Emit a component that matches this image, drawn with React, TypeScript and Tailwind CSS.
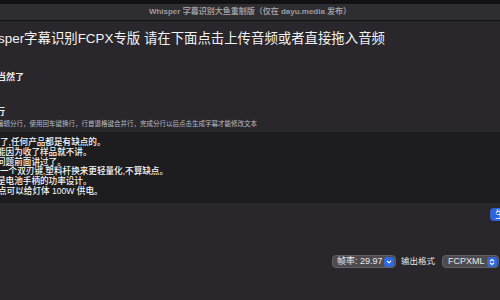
import React from "react";

const font = {
  fontFamily:
    '"Liberation Sans", "Noto Sans CJK SC", "Noto Sans", sans-serif',
};

// text in the transcript box, left edge of the window crops a few pixels
const lines = [
  { text: "了,任何产品都是有缺点的。", shift: 0 },
  { text: "能因为收了样品就不讲。", shift: -3 },
  { text: "问题前面讲过了。", shift: -3 },
  { text: "一个双刃键,塑料杆换来更轻量化,不算缺点。", shift: 0 },
  { text: "是电池手柄的功率设计。", shift: -3 },
  { text: "点可以给灯体 100W 供电。", shift: -2 },
];

function Chevron({ double = false }: { double?: boolean }) {
  return (
    <span className="flex h-[10px] w-[10px] items-center justify-center rounded-[3px] bg-[#2f6ae0]">
      {double ? (
        <svg width="6" height="8" viewBox="0 0 6 8" fill="none">
          <path d="M1.3 3 3 1.4 4.7 3M1.3 5 3 6.6 4.7 5" stroke="white" strokeWidth="1.1" strokeLinecap="round" strokeLinejoin="round" />
        </svg>
      ) : (
        <svg width="6" height="6" viewBox="0 0 6 6" fill="none">
          <path d="M1.3 2.2 3 3.9 4.7 2.2" stroke="white" strokeWidth="1.2" strokeLinecap="round" strokeLinejoin="round" />
        </svg>
      )}
    </span>
  );
}

export default function App() {
  return (
    <div className="flex h-[300px] w-[500px] flex-col overflow-hidden bg-[#29272c] text-[#ececec]" style={font}>
      {/* title bar */}
      <div className="h-[4px] bg-[#111113]" />
      <div className="flex h-[17px] items-center justify-center border-b border-[#141416] bg-[#2e2d31] text-[8px] font-semibold text-[#9c9b9f]">
        Whisper 字幕识别大鱼重制版（仅在 dayu.media 发布）
      </div>

      {/* heading */}
      <div className="ml-[-25px] mt-[9px] whitespace-nowrap text-[13.4px] leading-[18px] text-[#f2f2f2]">
        Whisper字幕识别FCPX专版 请在下面点击上传音频或者直接拖入音频
      </div>

      <div className="ml-[-3px] mt-[23px] whitespace-nowrap text-[9px] font-bold leading-[12px]">
        当然了
      </div>

      <div className="ml-[-4px] mt-[23px] whitespace-nowrap text-[9px] font-bold leading-[12px]">
        行
      </div>
      <div className="ml-[-3px] mt-[1px] whitespace-nowrap text-[6.5px] leading-[9px] text-[#bdbcc0]">
        编辑分行，使用回车键换行，行首退格键合并行，完成分行以后点击生成字幕才能修改文本
      </div>

      {/* transcript box */}
      <div className="mt-[4px] h-[71px] bg-[#1d1d1f] pt-[6px]">
        {lines.map((l) => (
          <div
            key={l.text}
            className="whitespace-nowrap text-[8.6px] font-medium leading-[9.8px] text-[#f6f6f6]"
            style={{ marginLeft: l.shift }}
          >
            {l.text}
          </div>
        ))}
      </div>

      {/* generate button */}
      <div className="mt-[5px] flex justify-end">
        <button className="mr-[-40px] flex h-[13px] items-center whitespace-nowrap rounded-[4px] bg-[#2c62da] px-[5px] text-[10px] leading-none text-white shadow">
          生成字幕
        </button>
      </div>

      {/* bottom controls */}
      <div className="mt-[34px] flex items-center justify-end pr-[1px] text-[9px] text-[#e6e6e6]">
        <div className="flex h-[13px] w-[64px] items-center justify-between whitespace-nowrap rounded-[4px] border border-[#626065] bg-[#4d4b50] pl-[4px] pr-[1px]">
          <span>帧率: 29.97</span>
          <Chevron />
        </div>
        <span className="ml-[5px] mr-[7px] whitespace-nowrap text-[8.5px]">输出格式</span>
        <div className="flex h-[13px] w-[57px] items-center justify-between whitespace-nowrap rounded-[4px] border border-[#626065] bg-[#4d4b50] pl-[5px] pr-[1px]">
          <span>FCPXML</span>
          <Chevron double />
        </div>
      </div>
    </div>
  );
}
